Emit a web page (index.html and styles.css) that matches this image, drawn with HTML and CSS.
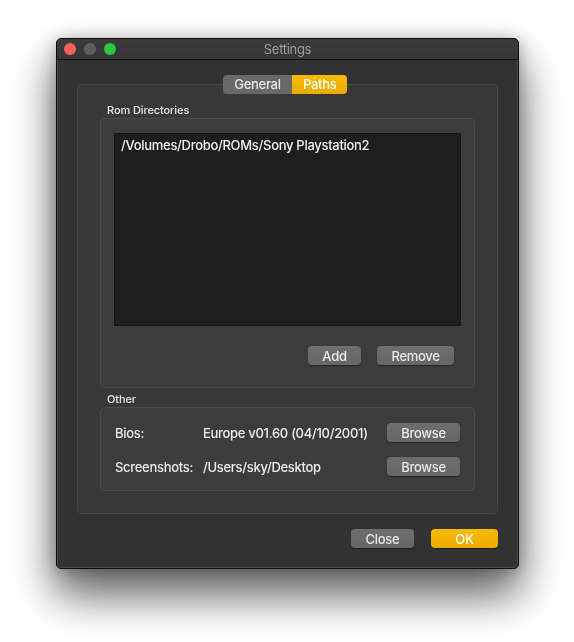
FILE: index.html
```html
<!DOCTYPE html>
<html lang="en">
<head>
    <meta charset="UTF-8">
    <meta name="viewport" content="width=device-width, initial-scale=1.0">
    <title>Settings</title>
    <link rel="stylesheet" href="styles.css">
</head>
<body>
    <div class="window">
        <div class="titlebar">
            <div class="lights">
                <span class="light close"></span>
                <span class="light min"></span>
                <span class="light zoom"></span>
            </div>
            <div class="title">Settings</div>
        </div>

        <div class="content">
            <div class="tabs">
                <div class="segment">General</div>
                <div class="segment active">Paths</div>
            </div>

            <div class="tab-box">
                <div class="group-label">Rom Directories</div>
                <div class="group rom-group">
                    <div class="dir-list">
                        <div class="dir-item">/Volumes/Drobo/ROMs/Sony Playstation2</div>
                    </div>
                    <div class="list-buttons">
                        <button class="btn btn-add">Add</button>
                        <button class="btn btn-remove">Remove</button>
                    </div>
                </div>

                <div class="group-label other-label">Other</div>
                <div class="group other-group">
                    <div class="row">
                        <span class="row-label">Bios:</span>
                        <span class="row-value">Europe v01.60 (04/10/2001)</span>
                        <button class="btn btn-browse">Browse</button>
                    </div>
                    <div class="row">
                        <span class="row-label">Screenshots:</span>
                        <span class="row-value">/Users/sky/Desktop</span>
                        <button class="btn btn-browse">Browse</button>
                    </div>
                </div>
            </div>

            <div class="footer">
                <button class="btn btn-close">Close</button>
                <button class="btn btn-ok">OK</button>
            </div>
        </div>
    </div>
</body>
</html>
```

FILE: styles.css
```css
/* Page */
html {
    background-color: #fff;
}
body {
    margin: 0;
    padding: 38px 0 0 56px;
    height: 642px;
    box-sizing: border-box;
    font-family: Inter, "Noto Sans", sans-serif;
    font-size: 13px;
    font-weight: 500;
    letter-spacing: -0.3px;
    color: #ececec;
}

/* Window frame */
.window {
    box-sizing: border-box;
    width: 463px;
    height: 531px;
    background-color: #323232;
    border: 1px solid #0c0c0c;
    border-radius: 5px;
    box-shadow: inset 0 0 0 1px rgba(255, 255, 255, 0.12);
    filter: drop-shadow(0 24px 22px rgba(0, 0, 0, 0.55)) drop-shadow(0 2px 8px rgba(0, 0, 0, 0.3));
    display: flex;
    flex-direction: column;
}
.titlebar {
    position: relative;
    height: 21px;
    border-bottom: 1px solid #0f0f0f;
    background: linear-gradient(#3b3b3b, #363636);
    border-radius: 4px 4px 0 0;
    display: flex;
    align-items: center;
    justify-content: center;
}
.lights {
    position: absolute;
    left: 7px;
    top: 4px;
    display: flex;
    gap: 8px;
}
.light {
    width: 12px;
    height: 12px;
    border-radius: 50%;
}
.light.close { background-color: #fe5f57; }
.light.min { background-color: #5e5e5e; }
.light.zoom { background-color: #29c840; }
.title {
    color: #9c9c9c;
    font-size: 13px;
    font-weight: 400;
}

/* Body of the window */
.content {
    flex: 1;
    padding: 15px 20px 20px 20px;
    display: flex;
    flex-direction: column;
}

/* Segmented control sitting on the tab box edge */
.tabs {
    display: flex;
    justify-content: center;
    position: relative;
    z-index: 1;
    margin-bottom: -10px;
    margin-left: -5px;
}
.segment {
    height: 19px;
    line-height: 19px;
    padding: 0 11px;
    background-color: #686868;
    color: #e8e8e8;
    font-size: 13px;
}
.segment:first-child {
    width: 47px;
    border-radius: 4px 0 0 4px;
    text-align: center;
}
.segment.active {
    width: 33px;
    text-align: center;
    background: linear-gradient(#f6bc00, #e9ab00);
    color: #fff;
    border-radius: 0 4px 4px 0;
}

.tab-box {
    height: 430px;
    box-sizing: border-box;
    background-color: #383838;
    border: 1px solid #474747;
    border-radius: 5px;
    padding: 19px 22px 0 22px;
}

.group-label {
    font-size: 11px;
    line-height: 13px;
    padding-left: 7px;
    margin-bottom: 1px;
    color: #e6e6e6;
    letter-spacing: -0.1px;
}
.other-label {
    margin-top: 5px;
}
.group {
    background-color: #3c3c3c;
    border: 1px solid #4b4b4b;
    border-radius: 5px;
}

/* Rom directories */
.rom-group {
    height: 270px;
    box-sizing: border-box;
    padding: 14px 13px 0 13px;
}
.dir-list {
    height: 193px;
    box-sizing: border-box;
    background-color: #1e1e1e;
    border: 1px solid #161616;
    padding: 3px 6px;
}
.dir-item {
    line-height: 16px;
    color: #f0f0f0;
}
.list-buttons {
    display: flex;
    justify-content: flex-end;
    gap: 16px;
    margin-top: 20px;
    margin-right: 7px;
}

/* Buttons */
.btn {
    height: 19px;
    padding: 0;
    border: none;
    border-radius: 4px;
    background: linear-gradient(#6e6e6e, #666);
    color: #e8e8e8;
    font-family: inherit;
    font-size: 13px;
    font-weight: inherit;
    letter-spacing: inherit;
    box-shadow: 0 0.5px 1px rgba(0, 0, 0, 0.4);
}
.btn-add { width: 53px; }
.btn-remove { width: 77px; }
.btn-browse { width: 73px; }
.btn-close { width: 63px; }
.btn-ok {
    width: 67px;
    background: linear-gradient(#f6bc00, #e9ab00);
    color: #fff;
}

/* Other settings */
.other-group {
    height: 84px;
    box-sizing: border-box;
    padding: 15px 14px 0 14px;
    display: flex;
    flex-direction: column;
    gap: 15px;
}
.row {
    display: flex;
    align-items: center;
}
.row-label {
    width: 88px;
}
.row-value {
    flex: 1;
}

.footer {
    display: flex;
    justify-content: flex-end;
    gap: 17px;
    margin-top: 15px;
}
```
